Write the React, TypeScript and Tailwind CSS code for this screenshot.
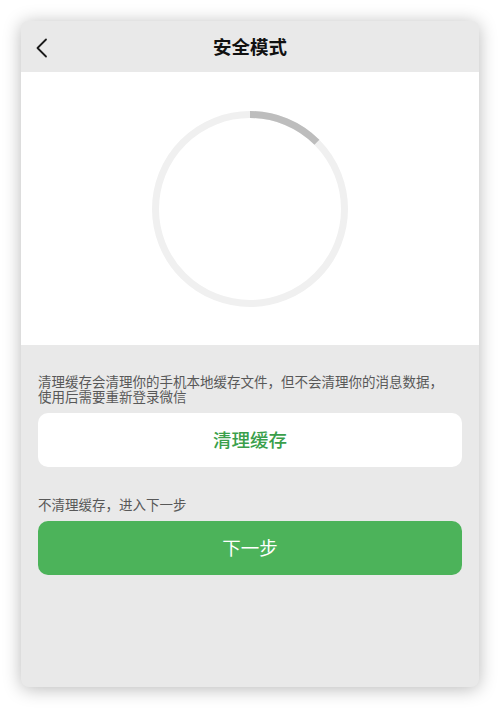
import React from "react";

export default function App() {
  const r = 94.5;
  const c = 2 * Math.PI * r;
  const dash = c / 8;
  return (
    <div
      className="min-h-[709px] w-[500px] bg-white p-[21px]"
      style={{ fontFamily: '"Noto Sans CJK SC", "Noto Sans", sans-serif' }}
    >
      <div className="flex h-[666px] w-[458px] flex-col overflow-hidden rounded-[8px] bg-[#e9e9e9] shadow-[0_2px_18px_rgba(0,0,0,0.28)]">
        <div className="relative flex h-[51px] items-center justify-center bg-[#e9e9e9]">
          <svg
            className="absolute left-[14px] top-[17px]"
            width="13"
            height="20"
            viewBox="0 0 13 20"
            fill="none"
          >
            <polyline
              points="11,1.5 2.5,10 11,18.5"
              stroke="#1a1a1a"
              strokeWidth="1.8"
              strokeLinecap="round"
              strokeLinejoin="round"
            />
          </svg>
          <span className="text-[18.5px] font-bold leading-none text-[#111]">安全模式</span>
        </div>
        <div className="flex h-[273px] items-center justify-center bg-white">
          <svg width="200" height="200" viewBox="0 0 200 200">
            <circle cx="100" cy="100" r={r} fill="none" stroke="#f0f0f0" strokeWidth="7" />
            <circle
              cx="100"
              cy="100"
              r={r}
              fill="none"
              stroke="#bdbdbd"
              strokeWidth="7"
              strokeDasharray={`${dash} ${c}`}
              transform="rotate(-90 100 100)"
            />
          </svg>
        </div>
        <div className="flex flex-col px-[17px] pt-[29px]">
          <p className="text-[13.5px] leading-[14.5px] text-[#585858]">
            清理缓存会清理你的手机本地缓存文件，但不会清理你的消息数据，
            <br />
            使用后需要重新登录微信
          </p>
          <button className="mt-[10px] flex h-[54px] w-full items-center justify-center rounded-[10px] bg-white text-[18.5px] font-medium text-[#3a9f4b]">
            清理缓存
          </button>
          <p className="mt-[29px] text-[13.5px] leading-[16px] text-[#585858]">不清理缓存，进入下一步</p>
          <button className="mt-[9px] flex h-[54px] w-full items-center justify-center rounded-[10px] bg-[#4cb35a] text-[18.5px] text-white">
            下一步
          </button>
        </div>
      </div>
    </div>
  );
}
